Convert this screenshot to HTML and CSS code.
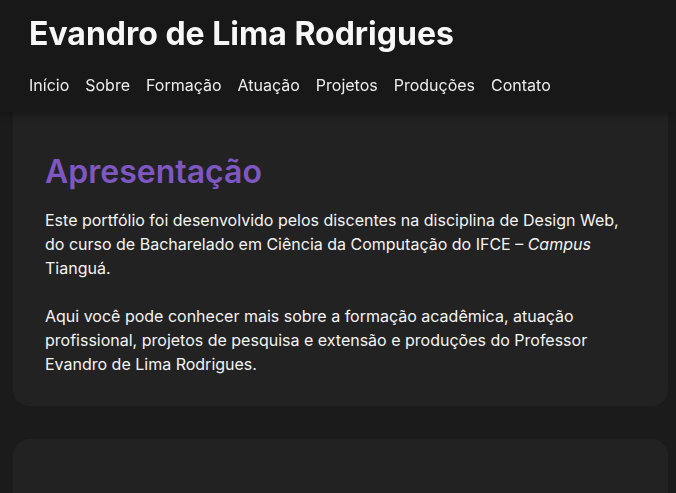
FILE: index.html
```html
<!DOCTYPE html>
<html lang="pt-BR">
<head>
<meta charset="utf-8">
<title>Evandro de Lima Rodrigues</title>
<link rel="stylesheet" href="styles.css">
</head>
<body>
<header class="site-header">
  <h1 class="site-title">Evandro de Lima Rodrigues</h1>
  <nav class="site-nav">
    <a href="#">Início</a>
    <a href="#">Sobre</a>
    <a href="#">Formação</a>
    <a href="#">Atuação</a>
    <a href="#">Projetos</a>
    <a href="#">Produções</a>
    <a href="#">Contato</a>
  </nav>
</header>
<main class="content">
  <section class="card">
    <h2 class="card-title">Apresentação</h2>
    <p>Este portfólio foi desenvolvido pelos discentes na disciplina de Design Web, do curso de Bacharelado em Ciência da Computação do IFCE – <em>Campus</em> Tianguá.</p>
    <p>Aqui você pode conhecer mais sobre a formação acadêmica, atuação profissional, projetos de pesquisa e extensão e produções do Professor Evandro de Lima Rodrigues.</p>
  </section>
  <section class="card card-empty"></section>
</main>
</body>
</html>
```
FILE: styles.css
```css
* { box-sizing: border-box; }
html, body {
  margin: 0;
  background: #1b1b1b;
  color: #f2f2f2;
  font-family: Inter, "Noto Sans", sans-serif;
}
.site-header {
  position: fixed;
  top: 0; left: 0; right: 0;
  z-index: 10;
  height: 112px;
  background: #181818;
  padding: 14px 29px 0;
  box-shadow: 0 2px 8px rgba(0,0,0,0.35);
}
.site-title {
  margin: 0;
  font-size: 32px;
  font-weight: 700;
  line-height: 40px;
  color: #f7f7f7;
}
.site-nav {
  display: flex;
  gap: 16px;
  margin-top: 19px;
}
.site-nav a {
  color: #ececec;
  text-decoration: none;
  font-size: 16px;
  font-weight: 400;
  line-height: 24px;
}
.content {
  padding: 96px 8px 0 13px;
  display: flex;
  flex-direction: column;
  gap: 33px;
}
.card {
  background: #222222;
  border-radius: 16px;
  padding: 56px 32px 30px;
}
.card-title {
  margin: 0 0 16px;
  font-size: 32px;
  font-weight: 600;
  line-height: 40px;
  color: #7e57c2;
}
.card p {
  margin: 0 0 24px;
  font-size: 16px;
  line-height: 24px;
  color: #f4f4f4;
}
.card p:last-child { margin-bottom: 0; }
.card-empty { height: 200px; }
```
